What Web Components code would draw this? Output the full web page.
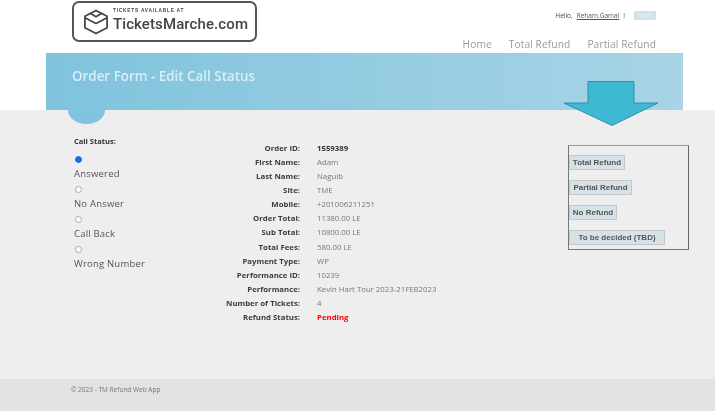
<!DOCTYPE html>
<html>
<head>
<meta charset="utf-8">
<title>Order Form</title>
<style>
  html, body { margin: 0; padding: 0; background: #fff; }
  body { font-family: "Open Sans", "Liberation Sans", sans-serif; width: 715px; height: 411px; overflow: hidden; }
</style>
</head>
<body>
<refund-app>
  <site-header slot="header"></site-header>
  <page-banner slot="banner">Order Form - Edit Call Status</page-banner>
  <call-status slot="left"></call-status>
  <order-details slot="middle"></order-details>
  <refund-actions slot="right"></refund-actions>
  <site-footer slot="footer">© 2023 - TM Refund Web App</site-footer>
</refund-app>

<script>
class RefundApp extends HTMLElement {
  constructor() {
    super();
    this.attachShadow({ mode: 'open' });
    this.shadowRoot.innerHTML = `
      <style>
        :host { display: flex; flex-direction: column; width: 715px; height: 411px; position: relative; filter: blur(0.6px); }
        .main { flex: 1; background: #eeeeee; display: flex; align-items: flex-start; padding-left: 74px; min-height: 0; }
        .arrow { position: absolute; left: 563px; top: 81px; width: 96px; height: 45px; }
      </style>
      <slot name="header"></slot>
      <slot name="banner"></slot>
      <div class="main">
        <slot name="left"></slot>
        <slot name="middle"></slot>
        <slot name="right"></slot>
      </div>
      <slot name="footer"></slot>
      <svg class="arrow" viewBox="0 0 96 45">
        <path d="M25 .5H71V22H95L49 44.5 1 22H25Z" fill="#3fb9d3" stroke="#2f8fa6"/>
      </svg>
    `;
  }
}

class SiteHeader extends HTMLElement {
  constructor() {
    super();
    this.attachShadow({ mode: 'open' });
    this.shadowRoot.innerHTML = `
      <style>
        :host { display: flex; height: 53px; box-sizing: border-box; padding: 1px 59px 0 72px; justify-content: space-between; background: #fff; }
        .logo { width: 185px; height: 41px; box-sizing: border-box; border: 2px solid #555; border-radius: 7px; display: flex; align-items: center; padding-left: 9px; gap: 4px; color: #444; }
        .logo svg { width: 26px; height: 26px; flex: none; }
        .brand { display: flex; flex-direction: column; }
        .small { font: bold 4.8px/6px "Liberation Sans", sans-serif; letter-spacing: .78px; margin-top: -1px; }
        .big { font: 500 15px/20px Roboto, "Liberation Sans", sans-serif; letter-spacing: .1px; }
        .side { display: flex; flex-direction: column; align-items: flex-end; }
        .user { display: flex; align-items: center; height: 17px; margin-top: 6px; font-size: 6.5px; color: #444; gap: 4px; }
        .user u { color: #555; }
        .logout { width: 22px; height: 9px; margin-left: 5px; background: #cfe3ec; color: #eef5f8; font-size: 5px; line-height: 9px; text-align: center; }
        nav { display: flex; gap: 17px; margin-top: 13px; font-size: 10.2px; line-height: 15px; color: #9a9a9a; letter-spacing: .1px; }
      </style>
      <div class="logo">
        <svg viewBox="0 0 26 27" fill="none" stroke="#444" stroke-width="1.8" stroke-linejoin="round">
          <path d="M13 1.5 24.5 7.5V19.5L13 25.5 1.5 19.5V7.5Z"/>
          <path d="M1.5 9 13 15 24.5 9"/>
          <path d="M7 4.5 13 8 19 4.5"/>
        </svg>
        <div class="brand">
          <span class="small">TICKETS AVAILABLE AT</span>
          <span class="big">TicketsMarche.com</span>
        </div>
      </div>
      <div class="side">
        <div class="user"><span>Hello,</span> <u>Reham.Gamal</u> <span>!</span><span class="logout">logout</span></div>
        <nav><span>Home</span><span>Total Refund</span><span>Partial Refund</span></nav>
      </div>
    `;
  }
}

class PageBanner extends HTMLElement {
  constructor() {
    super();
    this.attachShadow({ mode: 'open' });
    this.shadowRoot.innerHTML = `
      <style>
        :host { display: block; margin: 0 32px 0 46px; height: 57px; position: relative; box-sizing: border-box; padding: 13px 0 0 26px; background: linear-gradient(90deg, #7fc3dd 0%, #a8d4e6 100%); color: #d8eef6; font-size: 13.4px; line-height: 20px; font-weight: 600; }
        .bump { position: absolute; left: 22px; top: 57px; width: 37px; height: 14px; background: #7fc3dd; border-radius: 0 0 18.5px 18.5px / 0 0 14px 14px; }
      </style>
      <slot></slot>
      <div class="bump"></div>
    `;
  }
}

class CallStatus extends HTMLElement {
  constructor() {
    super();
    this.attachShadow({ mode: 'open' });
    const opts = ['Answered', 'No Answer', 'Call Back', 'Wrong Number'];
    this.shadowRoot.innerHTML = `
      <style>
        :host { display: block; width: 152px; flex: none; padding-top: 26px; color: #555; }
        .title { font-size: 7.5px; line-height: 11px; font-weight: 700; color: #333; margin-bottom: 7px; }
        .opt { height: 30px; display: flex; flex-direction: column; align-items: flex-start; }
        .dot { width: 7px; height: 7px; box-sizing: border-box; border-radius: 50%; border: 1px solid #a8a8a8; background: #fff; margin: 1.5px 0 0 .5px; }
        .dot.on { background: #0f6ff0; border-color: #0f6ff0; }
        label { font-size: 9.5px; line-height: 14px; letter-spacing: .2px; margin-top: 4px; }
      </style>
      <div class="title">Call Status:</div>
      ${opts.map((o, i) => `<div class="opt"><span class="dot${i === 0 ? ' on' : ''}"></span><label>${o}</label></div>`).join('')}
    `;
  }
}

class OrderDetails extends HTMLElement {
  constructor() {
    super();
    this.attachShadow({ mode: 'open' });
    const rows = [
      ['Order ID:', '1559389', 'id'],
      ['First Name:', 'Adam'],
      ['Last Name:', 'Naguib'],
      ['Site:', 'TME'],
      ['Mobile:', '+201006211251'],
      ['Order Total:', '11380.00 LE'],
      ['Sub Total:', '10800.00 LE'],
      ['Total Fees:', '580.00 LE'],
      ['Payment Type:', 'WP'],
      ['Performance ID:', '10239'],
      ['Performance:', 'Kevin Hart Tour 2023-21FEB2023'],
      ['Number of Tickets:', '4'],
      ['Refund Status:', 'Pending', 'pending'],
    ];
    this.shadowRoot.innerHTML = `
      <style>
        :host { display: grid; grid-template-columns: 74px 1fr; column-gap: 17px; grid-auto-rows: 14.08px; width: 342px; flex: none; padding-top: 31px; font-size: 7.8px; line-height: 14px; }
        .k { font-weight: 700; color: #3c3c3c; text-align: right; white-space: nowrap; justify-self: end; }
        .v { color: #777; white-space: nowrap; }
        .id { font-weight: 700; color: #333; }
        .pending { font-weight: 700; color: #ff0000; }
      </style>
      ${rows.map(r => `<span class="k">${r[0]}</span><span class="v ${r[2] || ''}">${r[1]}</span>`).join('')}
    `;
  }
}

class RefundActions extends HTMLElement {
  constructor() {
    super();
    this.attachShadow({ mode: 'open' });
    this.shadowRoot.innerHTML = `
      <style>
        :host { display: flex; flex-direction: column; align-items: flex-start; gap: 10px; width: 121px; height: 105px; box-sizing: border-box; flex: none; margin-top: 35px; padding-top: 9px; border: 1px solid #777; border-top-color: #999; border-right: 1.5px solid #666; border-bottom-width: 1.5px; }
        button { all: unset; box-sizing: border-box; height: 15px; background: #d6e1e8; border: 1px solid #c4c8cb; font: 600 8px/13px "Liberation Sans", sans-serif; color: #555; text-align: center; white-space: nowrap; }
        .a { width: 56px; } .b { width: 63px; } .c { width: 48px; } .d { width: 96px; }
      </style>
      <button class="a">Total Refund</button>
      <button class="b">Partial Refund</button>
      <button class="c">No Refund</button>
      <button class="d">To be decided (TBD)</button>
    `;
  }
}

class SiteFooter extends HTMLElement {
  constructor() {
    super();
    this.attachShadow({ mode: 'open' });
    this.shadowRoot.innerHTML = `
      <style>
        :host { display: block; height: 32px; box-sizing: border-box; padding: 6px 0 0 71px; background: #e2e2e2; color: #777; font-size: 6.5px; line-height: 10px; }
      </style>
      <slot></slot>
    `;
  }
}

customElements.define('refund-app', RefundApp);
customElements.define('site-header', SiteHeader);
customElements.define('page-banner', PageBanner);
customElements.define('call-status', CallStatus);
customElements.define('order-details', OrderDetails);
customElements.define('refund-actions', RefundActions);
customElements.define('site-footer', SiteFooter);
</script>
</body>
</html>
